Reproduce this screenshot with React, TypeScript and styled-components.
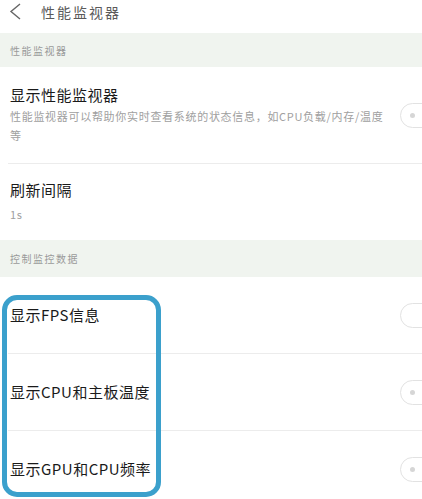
import styled, { createGlobalStyle } from 'styled-components';

const GlobalStyle = createGlobalStyle`
  html, body {
    margin: 0;
    padding: 0;
    background: #ffffff;
    overflow: hidden;
  }
  body {
    font-family: 'Noto Sans CJK SC', 'Noto Sans', sans-serif;
  }
`;

const S = {
  Page: styled.div`
    position: relative;
    width: 422px;
    height: 499px;
    overflow: hidden;
    background: #ffffff;
  `,

  Header: styled.div`
    display: flex;
    align-items: center;
    gap: 19px;
    height: 23px;
    padding: 0 0 10px 9px;
  `,

  HeaderTitle: styled.p`
    margin: 0;
    font-size: 14px;
    letter-spacing: 2px;
    color: #5a5a5a;
  `,

  SectionBand: styled.div<{ $height: number }>`
    display: flex;
    align-items: center;
    height: ${({ $height }) => $height}px;
    padding-left: 10px;
    background: #f0f4ef;
    font-size: 10px;
    letter-spacing: 1.5px;
    color: #9a9a9a;
  `,

  Row: styled.div<{ $height?: number }>`
    display: flex;
    align-items: center;
    justify-content: space-between;
    min-height: ${({ $height }) => ($height ? `${$height}px` : 'auto')};
    padding-left: 10px;
  `,

  RowText: styled.div<{ $padding?: string }>`
    width: 383px;
    flex-shrink: 0;
    padding: ${({ $padding }) => $padding || '0'};
  `,

  RowTitle: styled.p`
    margin: 0;
    font-size: 15px;
    line-height: 20px;
    font-weight: 400;
    letter-spacing: 0.5px;
    color: #1a1a1a;
  `,

  RowDesc: styled.p<{ $gap: number }>`
    margin: ${({ $gap }) => $gap}px 0 0;
    font-size: 11px;
    line-height: 19px;
    letter-spacing: 0.7px;
    color: #a0a0a0;
  `,

  Divider: styled.div`
    height: 1px;
    margin-left: 8px;
    background: #ececec;
  `,

  Toggle: styled.div`
    flex-shrink: 0;
    position: relative;
    width: 48px;
    height: 23px;
    margin-right: -28px;
    border: 1.5px solid #e2e2e2;
    border-radius: 13px;
    background: #ffffff;
  `,

  ToggleDot: styled.span`
    position: absolute;
    left: 9px;
    top: 9px;
    width: 5px;
    height: 5px;
    border-radius: 50%;
    background: #d6d6d6;
  `,

  Highlight: styled.div`
    position: absolute;
    left: 2px;
    top: 295px;
    width: 149px;
    height: 192px;
    border: 5px solid #3ba0cc;
    border-radius: 15px;
    pointer-events: none;
  `,
};

function BackIcon() {
  return (
    <svg width="13" height="17" viewBox="0 0 13 17">
      <path d="M11 1 L2 8.5 L11 16" fill="none" stroke="#666" strokeWidth="1.4" />
    </svg>
  );
}

function Toggle({ dot }: { dot?: boolean }) {
  return <S.Toggle>{dot && <S.ToggleDot />}</S.Toggle>;
}

const monitorRows = [
  { title: '显示FPS信息', dot: false },
  { title: '显示CPU和主板温度', dot: true },
  { title: '显示GPU和CPU频率', dot: true },
];

function App() {
  return (
    <>
      <GlobalStyle />
      <S.Page>
        <S.Header>
          <BackIcon />
          <S.HeaderTitle>性能监视器</S.HeaderTitle>
        </S.Header>

        <S.SectionBand $height={34}>性能监视器</S.SectionBand>

        <S.Row $height={95}>
          <S.RowText $padding="18px 0 18px">
            <S.RowTitle>显示性能监视器</S.RowTitle>
            <S.RowDesc $gap={2}>
              性能监视器可以帮助你实时查看系统的状态信息，如CPU负载/内存/温度等
            </S.RowDesc>
          </S.RowText>
          <Toggle dot />
        </S.Row>
        <S.Divider />

        <S.Row $height={76}>
          <S.RowText $padding="16px 0 16px">
            <S.RowTitle>刷新间隔</S.RowTitle>
            <S.RowDesc $gap={5}>1s</S.RowDesc>
          </S.RowText>
        </S.Row>

        <S.SectionBand $height={37}>控制监控数据</S.SectionBand>

        {monitorRows.map((row, i) => (
          <div key={row.title}>
            {i > 0 && <S.Divider />}
            <S.Row $height={76}>
              <S.RowText>
                <S.RowTitle>{row.title}</S.RowTitle>
              </S.RowText>
              <Toggle dot={row.dot} />
            </S.Row>
          </div>
        ))}

        <S.Highlight />
      </S.Page>
    </>
  );
}

export default App;
